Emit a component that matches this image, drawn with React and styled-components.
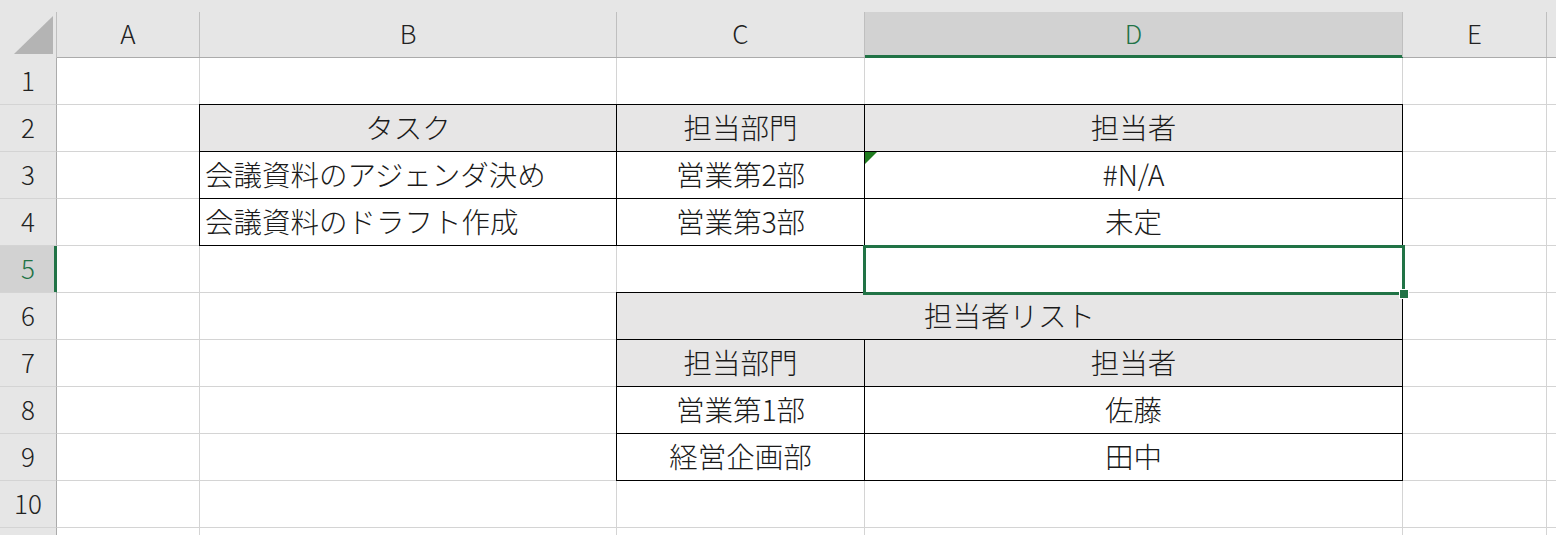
import React from "react";
import styled, { createGlobalStyle, css } from "styled-components";

const GREEN = "#217346";
const GRID = "#d4d4d4";
const HEAD_BG = "#e6e6e6";
const HEAD_SEL = "#d2d2d2";
const TABLE_HEAD = "#e7e6e6";

const Global = createGlobalStyle`
  html, body { margin: 0; padding: 0; background: #fff; }
  body { overflow: hidden; }
  #root { width: 1556px; height: 535px; overflow: hidden; }
`;

const Sheet = styled.div`
  display: grid;
  grid-template-columns: 57px 143px 417px 248px 538px 144px 1fr;
  grid-template-rows: 58px repeat(11, 47px);
  width: 1556px;
  height: 535px;
  overflow: hidden;
  font-family: "Noto Sans CJK JP", "Noto Sans", sans-serif;
  font-weight: 300;
  color: #1a1a1a;
  background: #fff;
`;

const ColHead = styled.div`
  display: flex;
  flex-direction: column;
  background: ${HEAD_BG};
  border-bottom: 1px solid ${(p) => (p.$sel ? GREEN : "#ababab")};
`;

const ColLabel = styled.div`
  flex: 1;
  margin-top: 12px;
  display: flex;
  align-items: center;
  justify-content: center;
  border-right: 1px solid #bfbfbf;
  font-size: 26px;
  padding-bottom: 4px;
  color: ${(p) => (p.$sel ? GREEN : "#222")};
  background: ${(p) => (p.$sel ? HEAD_SEL : HEAD_BG)};
  box-shadow: ${(p) => (p.$sel ? `inset 0 -2px 0 ${GREEN}` : "none")};
`;

const CornerMark = styled.svg`
  display: block;
  margin-bottom: -4px;
`;

const RowHead = styled.div`
  display: flex;
  align-items: center;
  justify-content: center;
  font-size: 26px;
  padding-bottom: 4px;
  background: ${(p) => (p.$sel ? HEAD_SEL : HEAD_BG)};
  color: ${(p) => (p.$sel ? GREEN : "#222")};
  border-right: 1px solid ${(p) => (p.$sel ? GREEN : "#ababab")};
  border-bottom: 1px solid ${GRID};
  box-shadow: ${(p) => (p.$sel ? `inset -2px 0 0 ${GREEN}` : "none")};
`;

const Cell = styled.div`
  position: relative;
  display: flex;
  align-items: center;
  justify-content: ${(p) => (p.$align === "left" ? "flex-start" : "center")};
  padding: 0 5px 3px;
  font-size: 28.5px;
  white-space: nowrap;
  border-right: 1px solid ${GRID};
  border-bottom: 1px solid ${GRID};
  background: ${(p) => (p.$head ? TABLE_HEAD : "#fff")};
  grid-column: ${(p) => (p.$span ? `span ${p.$span}` : "auto")};
  ${(p) =>
    p.$boxed &&
    css`
      &::after {
        content: "";
        position: absolute;
        inset: -1px;
        border: 1px solid #000;
        pointer-events: none;
        z-index: 1;
      }
    `}
`;

const Selection = styled.div`
  position: absolute;
  top: -1px;
  left: -2px;
  right: -3px;
  bottom: -3px;
  border: 3px solid ${GREEN};
  z-index: 3;
  pointer-events: none;
`;

const FillHandle = styled.div`
  position: absolute;
  right: -6px;
  bottom: -6px;
  width: 8px;
  height: 8px;
  background: ${GREEN};
  outline: 1px solid #fff;
  z-index: 4;
`;

const ErrorFlag = styled.div`
  position: absolute;
  top: 0;
  left: 0;
  width: 0;
  height: 0;
  border-top: 12px solid #1e7b1e;
  border-right: 12px solid transparent;
  z-index: 2;
`;

const cols = ["A", "B", "C", "D", "E", ""];

const H = (text, extra = {}) => ({ text, head: true, boxed: true, ...extra });
const V = (text, extra = {}) => ({ text, boxed: true, ...extra });

const rows = [
  { n: 1, cells: [null, null, null, null, null, null] },
  { n: 2, cells: [null, H("タスク"), H("担当部門"), H("担当者"), null, null] },
  {
    n: 3,
    cells: [null, V("会議資料のアジェンダ決め", { align: "left" }), V("営業第2部"), V("#N/A", { error: true }), null, null],
  },
  {
    n: 4,
    cells: [null, V("会議資料のドラフト作成", { align: "left" }), V("営業第3部"), V("未定"), null, null],
  },
  { n: 5, sel: true, cells: [null, null, null, { selected: true }, null, null] },
  { n: 6, cells: [null, null, H("担当者リスト", { span: 2 }), "skip", null, null] },
  { n: 7, cells: [null, null, H("担当部門"), H("担当者"), null, null] },
  { n: 8, cells: [null, null, V("営業第1部"), V("佐藤"), null, null] },
  { n: 9, cells: [null, null, V("経営企画部"), V("田中"), null, null] },
  { n: 10, cells: [null, null, null, null, null, null] },
  { n: 11, hidden: true, cells: [null, null, null, null, null, null] },
];

export default function App() {
  return (
    <>
      <Global />
      <Sheet>
        <ColHead>
          <ColLabel>
            <CornerMark width="56" height="46" viewBox="0 0 56 46">
              <polygon points="14,42 53,42 53,4" fill="#b4b4b4" />
            </CornerMark>
          </ColLabel>
        </ColHead>
        {cols.map((c, i) => (
          <ColHead key={i} $sel={c === "D"}>
            <ColLabel $sel={c === "D"}>{c}</ColLabel>
          </ColHead>
        ))}
        {rows.map((r) => (
          <React.Fragment key={r.n}>
            <RowHead $sel={r.sel}>{r.hidden ? "" : r.n}</RowHead>
            {r.cells.map((cell, ci) => {
              if (cell === "skip") return null;
              if (!cell) return <Cell key={ci} />;
              return (
                <Cell
                  key={ci}
                  $head={cell.head}
                  $boxed={cell.boxed}
                  $align={cell.align}
                  $span={cell.span}
                >
                  {cell.error && <ErrorFlag />}
                  {cell.text}
                  {cell.selected && (
                    <Selection>
                      <FillHandle />
                    </Selection>
                  )}
                </Cell>
              );
            })}
          </React.Fragment>
        ))}
      </Sheet>
    </>
  );
}
